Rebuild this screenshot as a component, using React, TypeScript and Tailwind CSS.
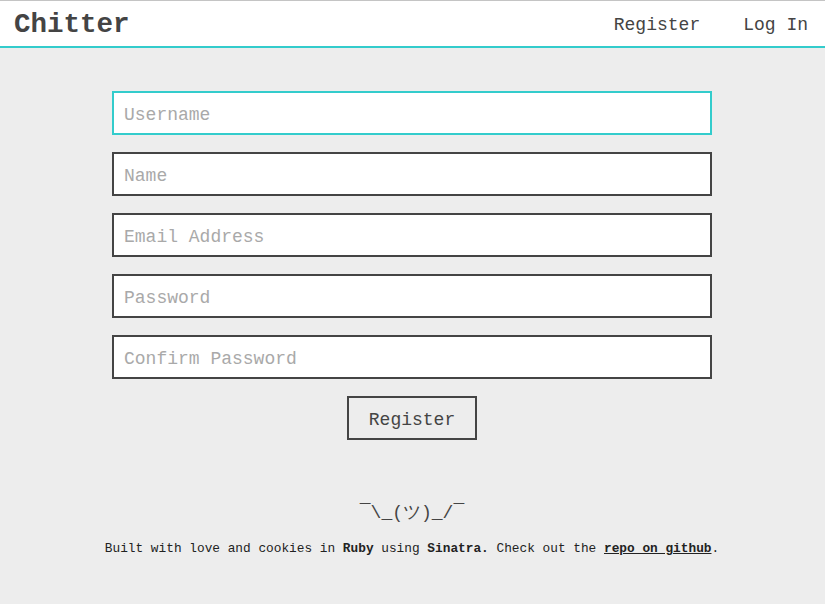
import React from "react";

const mono = { fontFamily: '"Liberation Mono", "Courier New", monospace' };

export default function App() {
  const fields = ["Name", "Email Address", "Password", "Confirm Password"];
  return (
    <div className="min-h-[604px] bg-[#ededed] text-[#444]" style={mono}>
      <header className="flex h-[48px] items-center justify-between border-t border-t-[#c4c4c4] border-b-2 border-b-[#33cccc] bg-white pl-[14px] pr-[17px] pt-[3px]">
        <h1 className="text-[27.5px] font-bold leading-none text-[#444]">Chitter</h1>
        <nav className="flex items-center gap-[43px] text-[18px] text-[#444]">
          <a>Register</a>
          <a>Log In</a>
        </nav>
      </header>
      <main className="flex flex-col items-center pt-[43px] pr-[1px]">
        <form className="flex w-[600px] flex-col gap-[17px]">
          <input
            autoFocus
            placeholder="Username"
            className="h-[44px] w-full border-2 border-[#33cccc] bg-white px-[10px] pt-[4px] text-[18px] outline-none placeholder:text-[#a9a9a9] caret-[#222]"
            style={mono}
          />
          {fields.map((f) => (
            <input
              key={f}
              placeholder={f}
              type={f.includes("Password") ? "password" : "text"}
              className="h-[44px] w-full border-2 border-[#444] bg-white px-[10px] pt-[4px] text-[18px] outline-none placeholder:text-[#a9a9a9]"
              style={mono}
            />
          ))}
          <div className="flex justify-center">
            <button
              type="button"
              className="h-[44px] w-[130px] border-2 border-[#444] bg-[#ededed] pt-[4px] text-[18px] text-[#444]"
              style={mono}
            >
              Register
            </button>
          </div>
        </form>
        <div className="mt-[64px] text-[18px] leading-none text-[#444]">¯\_(ツ)_/¯</div>
        <p className="mt-[17px] text-[12.8px] text-[#222]">
          Built with love and cookies in <b>Ruby</b> using <b>Sinatra.</b> Check out the{" "}
          <a className="font-bold underline">repo on github</a>.
        </p>
      </main>
    </div>
  );
}
